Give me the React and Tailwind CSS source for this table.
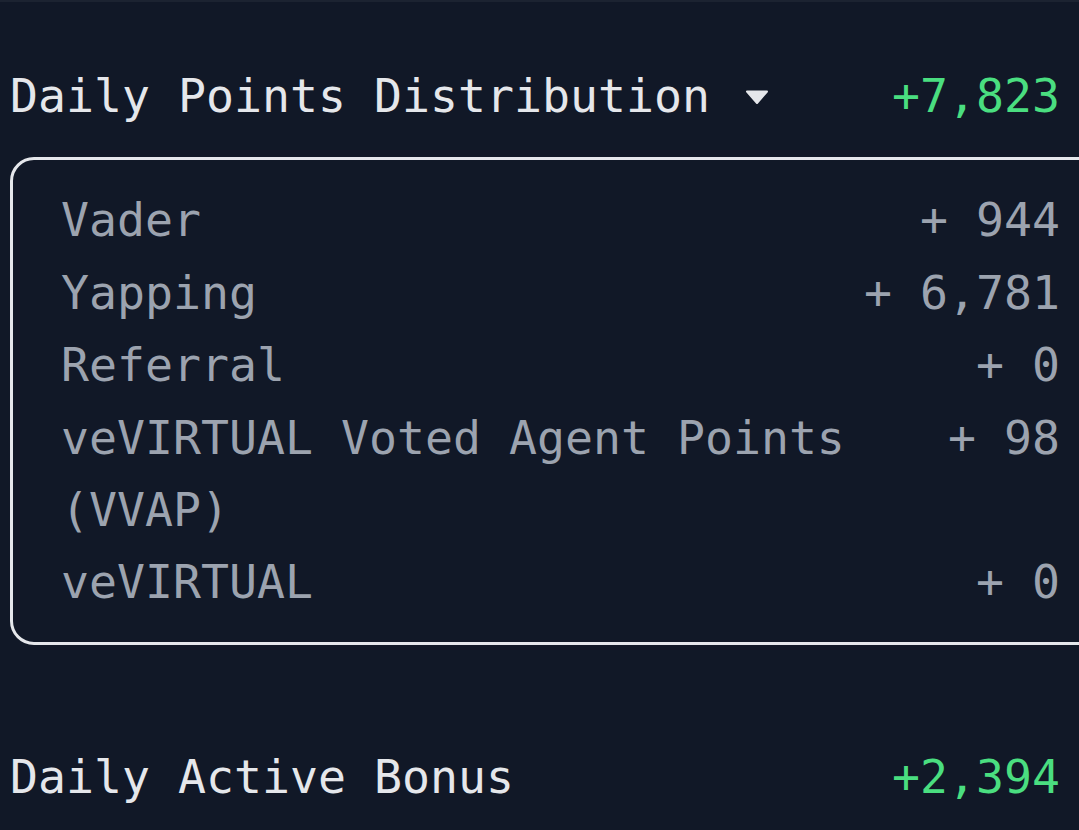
const items = [
  { label: "Vader", value: "+ 944" },
  { label: "Yapping", value: "+ 6,781" },
  { label: "Referral", value: "+ 0" },
  { label: "veVIRTUAL Voted Agent Points (VVAP)", value: "+ 98" },
  { label: "veVIRTUAL", value: "+ 0" },
];

const Caret = () => (
  <svg width="24" height="14" viewBox="0 0 24 14" className="ml-[35px] mt-[2px]">
    <path d="M2 1.5 H22 L12 13 Z" fill="#e5e7eb" stroke="#e5e7eb" strokeWidth="2" strokeLinejoin="round" />
  </svg>
);

export default function App() {
  return (
    <div className="h-[830px] w-full overflow-hidden bg-[#111827] border-t-2 border-[#1c2331] font-['DejaVu_Sans_Mono',monospace] text-[46.5px] leading-[72.4px]">
      <div className="pl-[10px] pt-[58px]">
        <div className="w-[1050px] flex items-center justify-between">
          <div className="flex items-center text-[#e5e7eb]">
            <span>Daily Points Distribution</span>
            <Caret />
          </div>
          <span className="text-[#4ade80]">+7,823</span>
        </div>

        <div className="mt-[25px] w-[1101px] rounded-[24px] border-[3px] border-[#e5e7eb] pl-[48px] pr-[48px] pt-[24px] pb-[23px] text-[#9ca3af]">
          {items.map((it) => (
            <div key={it.label} className="w-[999px] flex justify-between gap-[40px]">
              <span className="flex-1">{it.label}</span>
              <span className="shrink-0 whitespace-pre">{it.value}</span>
            </div>
          ))}
        </div>

        <div className="mt-[96px] w-[1050px] flex items-center justify-between">
          <span className="text-[#e5e7eb]">Daily Active Bonus</span>
          <span className="text-[#4ade80]">+2,394</span>
        </div>
      </div>
    </div>
  );
}
